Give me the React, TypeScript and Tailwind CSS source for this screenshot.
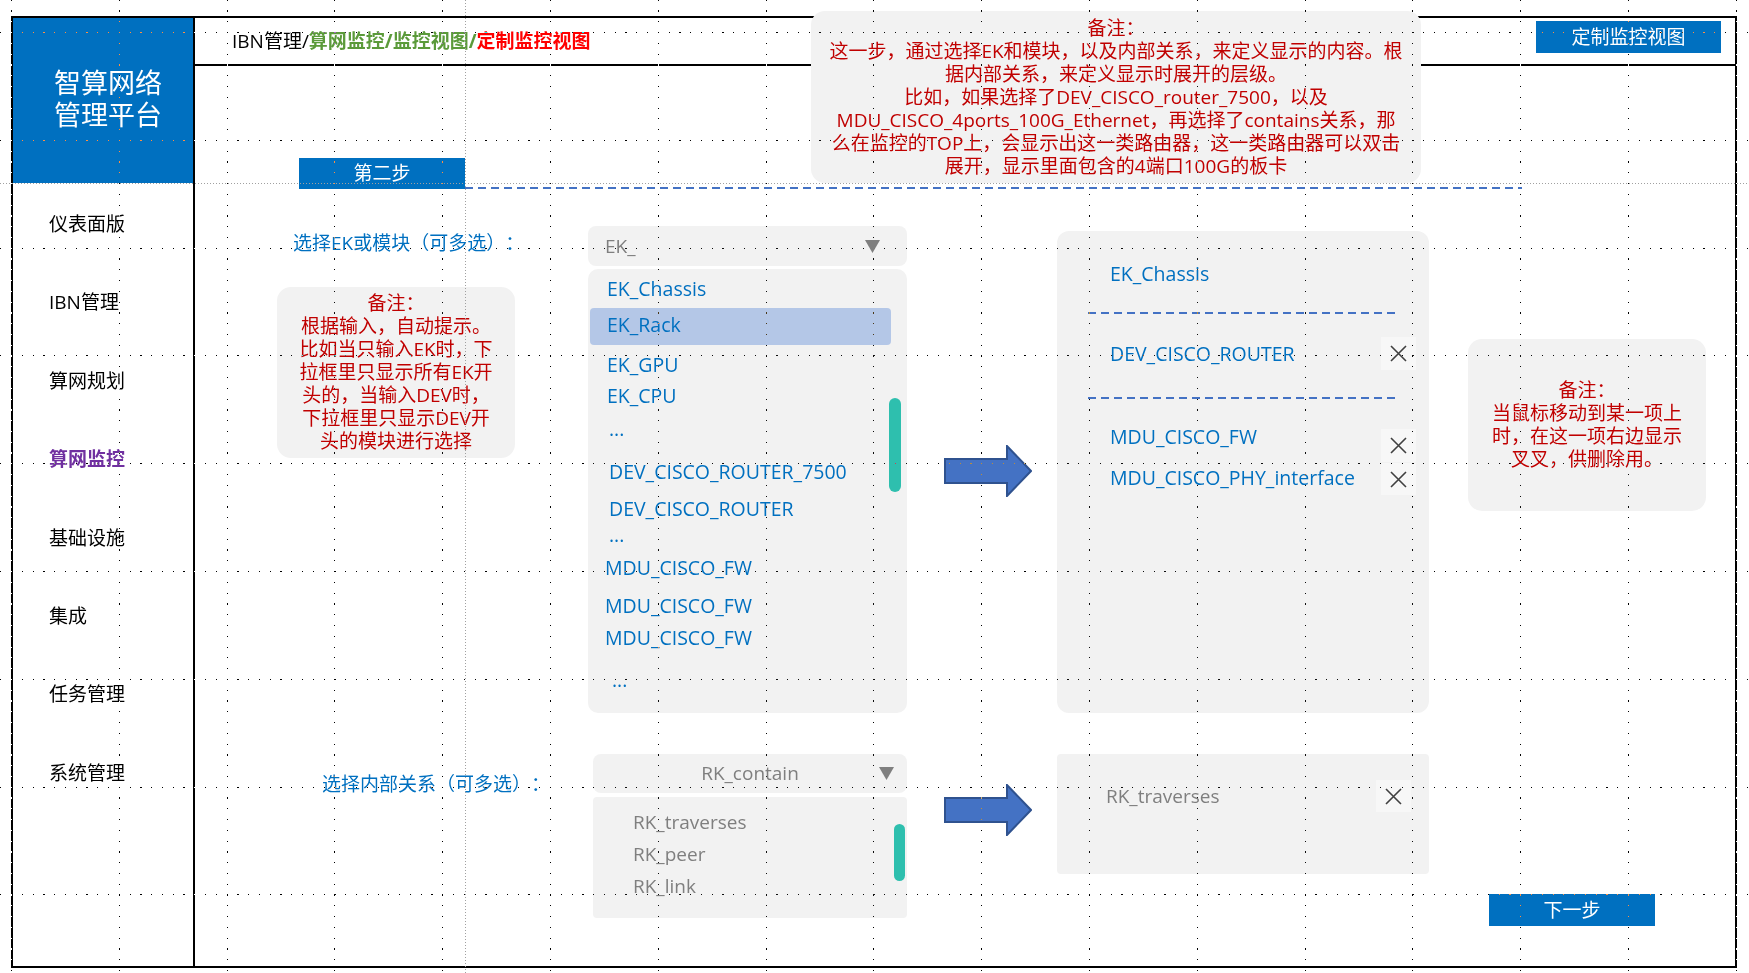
import React from 'react';

const hLines = [0, 1, 2, 3, 4, 5, 6, 7, 8].map((k) => Math.round(32 + 107.8 * k) + 0.5);
const vLines = Array.from({ length: 17 }, (_, k) => Math.round(11 + 107.8 * k) + 0.5);

const XMark = ({ h = 'h-[33px]' }: { h?: string }) => (
  <div className={`flex w-[35px] shrink-0 items-center justify-center bg-[#f7f7f7] ${h}`}>
    <svg width="17" height="17" viewBox="0 0 17 17">
      <path d="M1 1L16 16M16 1L1 16" stroke="#404040" strokeWidth="1.6" />
    </svg>
  </div>
);

const BlockArrow = () => (
  <svg width="88" height="52" viewBox="0 0 88 52">
    <polygon points="1,14 63,14 63,1 87,26 63,51 63,38 1,38" fill="#4472c4" stroke="#2f528f" strokeWidth="2" />
  </svg>
);

const Caret = () => (
  <svg width="15" height="13" viewBox="0 0 15 13">
    <polygon points="0,0 15,0 7.5,13" fill="#7f7f7f" />
  </svg>
);

const Dashes = ({ w }: { w: string }) => (
  <div className={`h-[2px] bg-[repeating-linear-gradient(90deg,#4472c4_0_8px,transparent_8px_13px)] ${w}`} />
);

const menu = ['仪表面版', 'IBN管理', '算网规划', '算网监控', '基础设施', '集成', '任务管理', '系统管理'];

export default function App() {
  return (
    <div className="relative h-[973px] w-[1749px] overflow-hidden bg-white font-['Open_Sans','Noto_Sans_CJK_SC',sans-serif] text-black [text-spacing-trim:space-all]">
      {/* outer frame */}
      <div className="ml-[11px] mt-[16px] flex h-[952px] w-[1726px] border-2 border-black">
        {/* sidebar */}
        <aside className="flex w-[182px] shrink-0 flex-col border-r-2 border-black">
          <div className="flex h-[165px] items-center justify-center bg-[#0070c0] pb-[4px] pl-[10px] text-center text-[27px] leading-[32px] text-white">
            <div>
              智算网络
              <br />
              管理平台
            </div>
          </div>
          <div className="pt-[2px]">
            {menu.map((m) => (
              <div
                key={m}
                className={`flex h-[78.4px] items-center pl-[36px] text-[19px] ${m === '算网监控' ? 'font-bold text-[#7030a0]' : ''}`}
              >
                {m}
              </div>
            ))}
          </div>
        </aside>

        {/* main */}
        <div className="flex flex-1 flex-col">
          {/* header */}
          <div className="flex h-[48px] shrink-0 items-start border-b-2 border-black">
            <div className="ml-[37px] self-center text-[19px] leading-[24px]">
              IBN管理/<span className="font-bold text-[#5b9a3a]">算网监控/监控视图/</span>
              <span className="font-bold text-[#ff0000]">定制监控视图</span>
            </div>
            <button className="ml-auto mr-[14px] mt-[3px] flex h-[32px] w-[185px] items-center justify-center bg-[#0070c0] text-[19px] text-white">
              定制监控视图
            </button>
          </div>

          {/* step bar */}
          <div className="mt-[92px] flex items-end">
            <div className="ml-[104px] flex h-[31px] w-[166px] items-center justify-center bg-[#0070c0] text-[19px] text-white">
              第二步
            </div>
            <Dashes w="w-[1057px]" />
          </div>

          {/* EK row */}
          <div className="mt-[37px] flex items-start">
            <div className="w-[393px] shrink-0">
              <div className="ml-[98px] mt-[5px] text-[19px] leading-[24px] text-[#0070c0]">选择EK或模块（可多选）：</div>
              <div className="ml-[82px] mt-[32px] h-[171px] w-[238px] rounded-[14px] bg-[#f2f2f2] pt-[5px] text-center text-[19px] leading-[23px] text-[#c00000]">
                备注：<br />
                根据输入，自动提示。<br />
                比如当只输入EK时，下<br />
                拉框里只显示所有EK开<br />
                头的，当输入DEV时，<br />
                下拉框里只显示DEV开<br />
                头的模块进行选择
              </div>
            </div>

            <div className="w-[319px] shrink-0">
              <div className="flex h-[40px] items-center justify-between rounded-[8px] bg-[#f2f2f2] pl-[17px] pr-[27px] text-[19px] text-[#7f7f7f]">
                <span>EK_</span>
                <Caret />
              </div>
              <div className="relative mt-[3px] h-[444px] rounded-[10px] bg-[#f2f2f2] pt-[4px] text-[19.5px] leading-[24px] text-[#0070c0]">
                <div className="flex h-[32px] items-center pl-[19px]">EK_Chassis</div>
                <div className="ml-[2px] mt-[3px] flex h-[37px] w-[301px] items-center rounded-[4px] bg-[#b4c7e7] pb-[3px] pl-[17px]">EK_Rack</div>
                <div className="mt-[4px] flex h-[32px] items-center pl-[19px]">EK_GPU</div>
                <div className="flex h-[30px] items-center pl-[19px]">EK_CPU</div>
                <div className="flex h-[36px] items-center pl-[21px]">...</div>
                <div className="flex h-[50px] items-center pl-[21px]">DEV_CISCO_ROUTER_7500</div>
                <div className="flex h-[24px] items-center pl-[21px]">DEV_CISCO_ROUTER</div>
                <div className="flex h-[28px] items-center pl-[21px]">...</div>
                <div className="flex h-[38px] items-center pl-[17px]">MDU_CISCO_FW</div>
                <div className="flex h-[38px] items-center pl-[17px]">MDU_CISCO_FW</div>
                <div className="flex h-[26px] items-center pl-[17px]">MDU_CISCO_FW</div>
                <div className="flex h-[58px] items-center pl-[24px]">...</div>
                <div className="absolute right-[6px] top-[129px] h-[94px] w-[12px] rounded-full bg-[#2ebfae]" />
              </div>
            </div>

            <div className="ml-[37px] mt-[219px] shrink-0">
              <BlockArrow />
            </div>

            <div className="ml-[25px] mt-[5px] h-[482px] w-[372px] shrink-0 rounded-[12px] bg-[#f2f2f2] text-[19.5px] leading-[24px] text-[#0070c0]">
              <div className="flex h-[81px] items-center pl-[53px] pt-[5px]">EK_Chassis</div>
              <div className="pl-[31px]">
                <Dashes w="w-[309px]" />
              </div>
              <div className="flex h-[83px] items-center pb-[4px] pl-[53px] pr-[13px]">
                <span>DEV_CISCO_ROUTER</span>
                <span className="ml-auto">
                  <XMark />
                </span>
              </div>
              <div className="pl-[31px]">
                <Dashes w="w-[309px]" />
              </div>
              <div className="flex h-[63px] items-end pl-[53px] pr-[13px]">
                <span className="mb-[13px]">MDU_CISCO_FW</span>
                <span className="ml-auto">
                  <XMark />
                </span>
              </div>
              <div className="flex h-[36px] items-start pl-[53px] pr-[13px]">
                <span className="mt-[4px]">MDU_CISCO_PHY_interface</span>
                <span className="ml-auto mt-[1px]">
                  <XMark h="h-[32px]" />
                </span>
              </div>
            </div>

            <div className="ml-[39px] mt-[113px] flex h-[172px] w-[238px] shrink-0 items-center justify-center rounded-[14px] bg-[#f2f2f2] text-center text-[19px] leading-[23px] text-[#c00000]">
              <div>
                备注：<br />
                当鼠标移动到某一项上<br />
                时，在这一项右边显示<br />
                叉叉，供删除用。
              </div>
            </div>
          </div>

          {/* RK row */}
          <div className="mt-[41px] flex items-start">
            <div className="w-[398px] shrink-0">
              <div className="ml-[127px] mt-[18px] text-[19px] leading-[24px] text-[#0070c0]">选择内部关系（可多选）：</div>
            </div>

            <div className="w-[314px] shrink-0 text-[19px] text-[#7f7f7f]">
              <div className="grid h-[39px] grid-cols-[1fr_auto_1fr] items-center rounded-[8px] bg-[#f2f2f2]">
                <span />
                <span>RK_contain</span>
                <span className="flex justify-end pr-[13px]">
                  <Caret />
                </span>
              </div>
              <div className="relative mt-[4px] h-[121px] rounded-[4px] bg-[#f2f2f2] pl-[40px] pt-[9px] leading-[24px]">
                <div className="flex h-[32px] items-center">RK_traverses</div>
                <div className="flex h-[32px] items-center">RK_peer</div>
                <div className="flex h-[32px] items-center">RK_link</div>
                <div className="absolute right-[2px] top-[27px] h-[57px] w-[11px] rounded-full bg-[#2ebfae]" />
              </div>
            </div>

            <div className="ml-[37px] mt-[30px] shrink-0">
              <BlockArrow />
            </div>

            <div className="ml-[25px] h-[120px] w-[372px] shrink-0 rounded-[4px] bg-[#f2f2f2] pt-[26px] text-[19px] leading-[24px] text-[#7f7f7f]">
              <div className="flex h-[32px] items-center pl-[49px] pr-[18px]">
                <span>RK_traverses</span>
                <span className="ml-auto">
                  <XMark h="h-[32px]" />
                </span>
              </div>
            </div>

            <button className="ml-[60px] mt-[140px] flex h-[32px] w-[166px] shrink-0 items-center justify-center bg-[#0070c0] text-[19px] text-white">
              下一步
            </button>
          </div>
        </div>
      </div>

      {/* top annotation */}
      <div className="absolute left-[811px] top-[11px] h-[172px] w-[610px] rounded-[14px] bg-[#f2f2f2] pt-[6px] text-center text-[19px] leading-[23px] text-[#c00000]">
        备注：<br />
        这一步，通过选择EK和模块，以及内部关系，来定义显示的内容。根<br />
        据内部关系，来定义显示时展开的层级。<br />
        比如，如果选择了DEV_CISCO_router_7500，以及<br />
        MDU_CISCO_4ports_100G_Ethernet，再选择了contains关系，那<br />
        么在监控的TOP上，会显示出这一类路由器，这一类路由器可以双击<br />
        展开，显示里面包含的4端口100G的板卡
      </div>

      {/* guide lines */}
      <svg className="pointer-events-none absolute inset-0" width="1749" height="973" shapeRendering="crispEdges">
        <line x1="0" x2="1749" y1="183.5" y2="183.5" stroke="#a0a0a0" strokeDasharray="1 2" />
        <line x1="465.5" x2="465.5" y1="0" y2="973" stroke="#a0a0a0" strokeDasharray="1 2" />
      </svg>

      {/* dotted grid */}
      <svg className="pointer-events-none absolute inset-0 mix-blend-difference" width="1749" height="973" shapeRendering="crispEdges">
        {hLines.map((y) => (
          <line key={`h${y}`} x1="0.2" x2="1749" y1={y} y2={y} stroke="#fff" strokeWidth="1" strokeDasharray="1.2 9.58" />
        ))}
        {vLines.map((x) => (
          <line key={`v${x}`} x1={x} x2={x} y1="-0.3" y2="973" stroke="#fff" strokeWidth="1" strokeDasharray="1.2 9.58" />
        ))}
      </svg>
    </div>
  );
}
